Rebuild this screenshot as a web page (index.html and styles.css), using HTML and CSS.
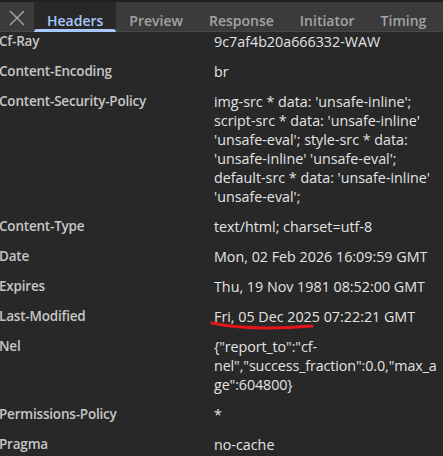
FILE: index.html
```html
<!DOCTYPE html>
<html>
<head>
<meta charset="utf-8">
<link rel="stylesheet" href="styles.css">
</head>
<body>
<div class="panel">
  <div class="topstrip"></div>
  <div class="tabbar">
    <div class="close">
      <svg width="16" height="16" viewBox="0 0 16 16"><path d="M1 1 L15 15 M15 1 L1 15" stroke="#a9a9a9" stroke-width="1.4" fill="none"/></svg>
    </div>
    <div class="tab active">Headers</div>
    <div class="tab">Preview</div>
    <div class="tab">Response</div>
    <div class="tab">Initiator</div>
    <div class="tab">Timing</div>
  </div>
  <div class="content">
    <div class="list">
      <div class="row"><div class="name">Cf-Ray</div><div class="value">9c7af4b20a666332-WAW</div></div>
      <div class="row"><div class="name">Content-Encoding</div><div class="value">br</div></div>
      <div class="row"><div class="name">Content-Security-Policy</div><div class="value">img-src * data: 'unsafe-inline'; script-src * data: 'unsafe-inline' 'unsafe-eval'; style-src * data: 'unsafe-inline' 'unsafe-eval'; default-src * data: 'unsafe-inline' 'unsafe-eval';</div></div>
      <div class="row"><div class="name">Content-Type</div><div class="value">text/html; charset=utf-8</div></div>
      <div class="row"><div class="name">Date</div><div class="value">Mon, 02 Feb 2026 16:09:59 GMT</div></div>
      <div class="row"><div class="name">Expires</div><div class="value">Thu, 19 Nov 1981 08:52:00 GMT</div></div>
      <div class="row"><div class="name">Last-Modified</div><div class="value">Fri, 05 Dec 2025 07:22:21 GMT</div></div>
      <div class="row"><div class="name">Nel</div><div class="value break">{"report_to":"cf-nel","success_fraction":0.0,"max_age":604800}</div></div>
      <div class="row"><div class="name">Permissions-Policy</div><div class="value">*</div></div>
      <div class="row"><div class="name">Pragma</div><div class="value">no-cache</div></div>
    </div>
  </div>
  <svg class="mark" width="443" height="456" viewBox="0 0 443 456"><path d="M212 323 Q 250 331 312 326" stroke="#e3161b" stroke-width="3" fill="none" stroke-linecap="round"/></svg>
</div>
</body>
</html>
```
FILE: styles.css
```css
html, body {
  margin: 0;
  padding: 0;
  background: #282828;
}
.panel {
  width: 443px;
  height: 456px;
  overflow: hidden;
  position: relative;
  font-family: "Open Sans", "Noto Sans", sans-serif;
}
.topstrip {
  height: 2px;
  background: #202020;
}
.tabbar {
  height: 29px;
  background: #3b3b3b;
  border-bottom: 1px solid #474747;
  display: flex;
  align-items: stretch;
  position: relative;
  z-index: 1;
}
.close {
  width: 34px;
  display: flex;
  align-items: center;
  justify-content: center;
  padding-top: 3px;
  box-sizing: border-box;
}
.tab {
  display: flex;
  align-items: center;
  padding: 7px 13px 0;
  font-size: 14px;
  font-weight: 600;
  color: #a3a3a3;
  box-sizing: border-box;
}
.tab.active {
  background: #282828;
  color: #a8c7fa;
  position: relative;
}
.tab.active::after {
  content: "";
  position: absolute;
  left: 0;
  right: 0;
  bottom: -1px;
  height: 3px;
  background: #a8c7fa;
  border-radius: 3px 3px 0 0;
}
.content {
  margin-top: -6px;
}
.list {
  display: flex;
  flex-direction: column;
}
.row {
  display: grid;
  grid-template-columns: 214px 1fr;
  padding: 5.5px 0;
  line-height: 19px;
}
.name {
  color: #c6c6c6;
  font-weight: 600;
  font-size: 13.5px;
  letter-spacing: -0.2px;
  margin-left: -1px;
}
.value {
  color: #e3e3e3;
  font-size: 14.3px;
}
.value.break {
  overflow-wrap: anywhere;
  letter-spacing: -0.1px;
}
.mark {
  position: absolute;
  left: 0;
  top: 0;
  pointer-events: none;
}
```
